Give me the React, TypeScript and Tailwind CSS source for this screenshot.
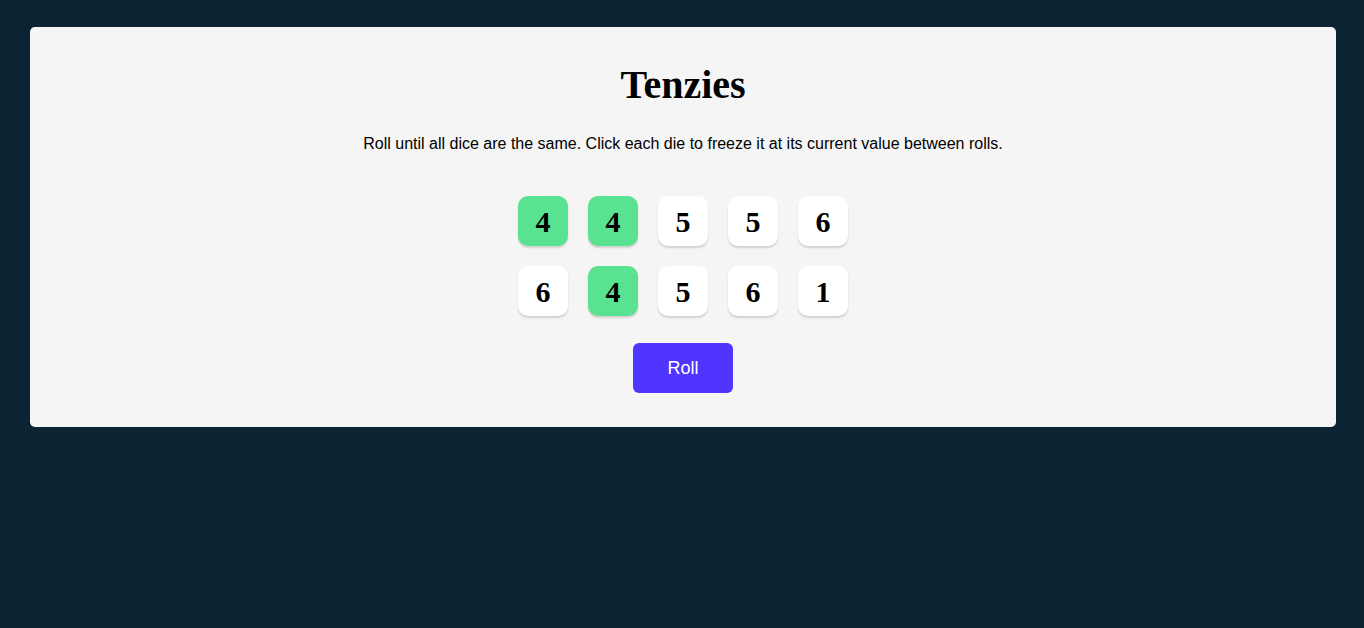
const dice = [
  { value: 4, held: true },
  { value: 4, held: true },
  { value: 5, held: false },
  { value: 5, held: false },
  { value: 6, held: false },
  { value: 6, held: false },
  { value: 4, held: true },
  { value: 5, held: false },
  { value: 6, held: false },
  { value: 1, held: false },
];

export default function App() {
  return (
    <div className="min-h-screen bg-[#0B2434] pl-[30px] pr-[28px] pt-[27px]">
      <main className="flex flex-col items-center rounded-[5px] bg-[#F5F5F5] pt-[35px] pb-[34px]">
        <h1 className="font-['Liberation_Serif',serif] text-[40px] font-bold leading-[46px] text-black">
          Tenzies
        </h1>
        <p className="mt-[26px] font-['Liberation_Sans',Arial,sans-serif] text-[16px] leading-[20px] text-black">
          Roll until all dice are the same. Click each die to freeze it at its current value between rolls.
        </p>
        <div className="mt-[42px] grid grid-cols-[repeat(5,50px)] gap-[20px]">
          {dice.map((die, i) => (
            <button
              key={i}
              className={`flex h-[50px] w-[50px] items-center justify-center rounded-[10px] font-['Liberation_Serif',serif] text-[30px] font-bold text-black shadow-[0_2px_2px_rgba(0,0,0,0.15)] ${
                die.held ? 'bg-[#59E391]' : 'bg-white'
              }`}
            >
              {die.value}
            </button>
          ))}
        </div>
        <button className="mt-[27px] h-[50px] w-[100px] rounded-[6px] bg-[#5035FF] font-['Liberation_Sans',Arial,sans-serif] text-[18px] text-white">
          Roll
        </button>
      </main>
    </div>
  );
}
